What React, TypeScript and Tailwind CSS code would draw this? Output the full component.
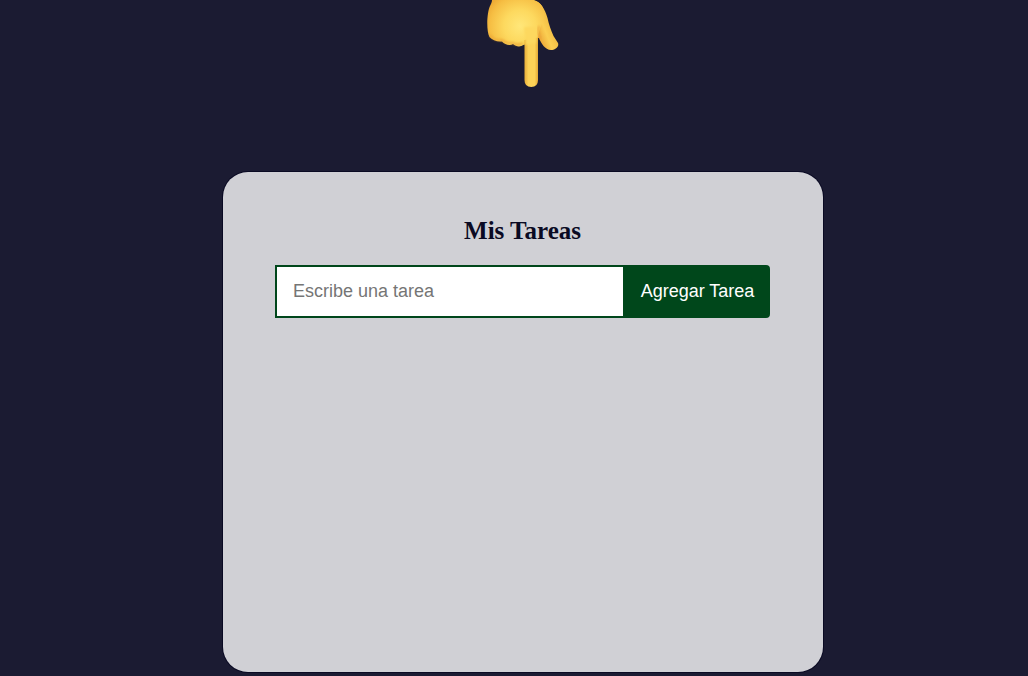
function PointingHand() {
  return (
    <svg width="72" height="88" viewBox="0 0 72 88" className="block" aria-hidden="true">
      <defs>
        <radialGradient id="palm" gradientUnits="userSpaceOnUse" cx="33" cy="26" r="40">
          <stop offset="0" stopColor="#ffe779" />
          <stop offset="0.4" stopColor="#fdd95f" />
          <stop offset="0.75" stopColor="#f6be43" />
          <stop offset="1" stopColor="#e9a12e" />
        </radialGradient>
        <linearGradient id="finger" x1="0" x2="1" y1="0" y2="0">
          <stop offset="0" stopColor="#e9ae39" />
          <stop offset="0.3" stopColor="#fdd257" />
          <stop offset="0.75" stopColor="#fdd257" />
          <stop offset="1" stopColor="#e5a935" />
        </linearGradient>
        <linearGradient id="thumb" gradientUnits="userSpaceOnUse" x1="50" y1="32" x2="65" y2="26">
          <stop offset="0" stopColor="#eeaa39" />
          <stop offset="0.5" stopColor="#fbce52" />
          <stop offset="1" stopColor="#f1bc43" />
        </linearGradient>
        <filter id="soft" x="-30%" y="-30%" width="160%" height="160%">
          <feGaussianBlur stdDeviation="1.1" />
        </filter>
      </defs>
      <path d="M40 0H46.500C54 2 58 9 60.500 18C62 25 64 30 66.500 36L71 43C72.500 47 67.500 50 64 50C58 50 54 43 52 38H44L40 20Z" fill="url(#thumb)" />
      <path d="M5 0H46C54 2 57 7 57 14C57 23 52 27 51 38L50 42L36 45C33 47.500 29 46.500 26 44C23 46 18 45 15 41.500C10 42 5 40 2.500 37C-1 31 0 12 3 6C4 4 5 2 5 0Z" fill="url(#palm)" />
      <path d="M37.500 40L51 37.500V80Q51 87 44.250 87Q37.500 87 37.500 80Z" fill="url(#finger)" />
      <path d="M37 27L50 27L49 43L39 45Z" fill="#fdd85e" filter="url(#soft)" />
      <path d="M52 26C50 31 52 35 54 39" fill="none" stroke="#e9a138" strokeWidth="1.4" filter="url(#soft)" />
      <path d="M3 35Q7 41 15 40Q20 44 26 43Q31 46 36 43" fill="none" stroke="#e89e30" strokeWidth="1.3" filter="url(#soft)" />
    </svg>
  );
}

export default function App() {
  return (
    <main className="flex h-[676px] flex-col items-center overflow-hidden bg-[#1b1b32] pl-[18px] [font-family:'Liberation_Serif',serif]">
      <div className="h-[172px] w-[72px] shrink-0">
        <PointingHand />
      </div>
      <section className="flex h-[500px] w-[600px] shrink-0 flex-col items-center rounded-[25px] bg-[#d0d0d5] shadow-[0_0_0_1px_#0a0a23]">
        <h1 className="mt-11 mr-px h-[30px] text-[25px] leading-[30px] font-bold text-[#0a0a23]">Mis Tareas</h1>
        <form
          className="mt-[19px] mr-px flex h-[53px] w-[495px] text-[18px] [font-family:'Liberation_Sans',sans-serif]"
          onSubmit={(event) => event.preventDefault()}
        >
          <input
            type="text"
            placeholder="Escribe una tarea"
            className="h-full w-[348px] min-w-0 border-2 border-r-0 border-[#00471b] bg-white px-4 text-[#0a0a23] outline-none placeholder:text-[#757575]"
          />
          <button className="h-full flex-1 rounded-r-[4px] border-2 border-[#00471b] bg-[#00471b] pl-0.5 whitespace-nowrap text-white">
            Agregar Tarea
          </button>
        </form>
      </section>
    </main>
  );
}
